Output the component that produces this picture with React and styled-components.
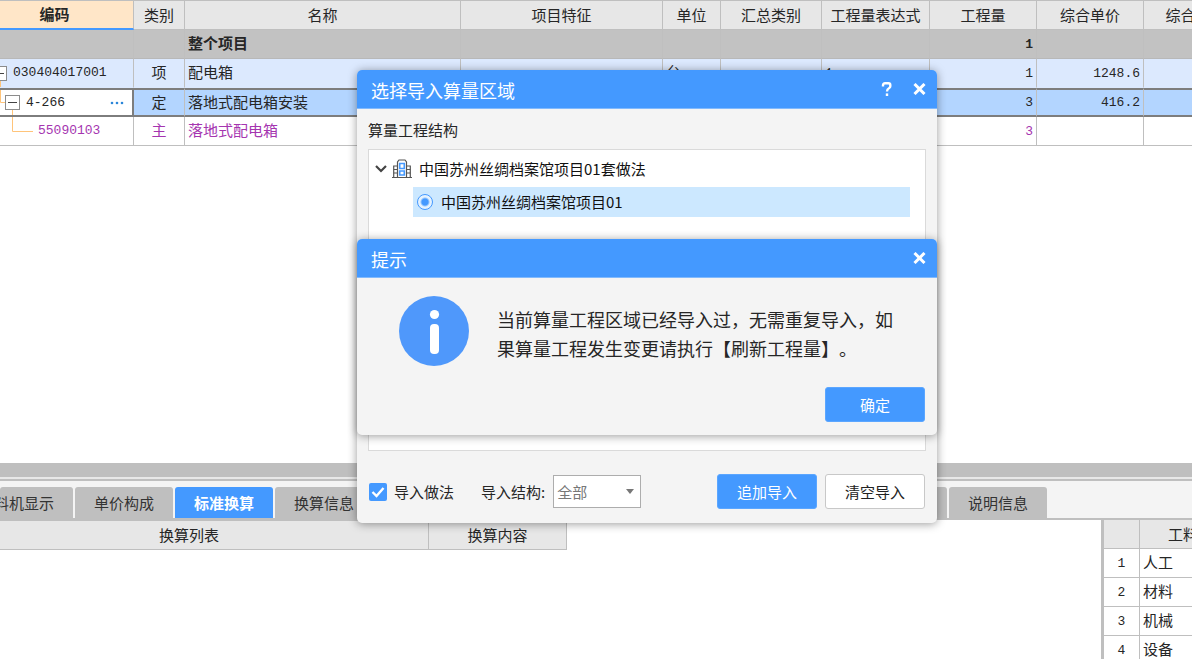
import React from "react";
import styled, { createGlobalStyle, css } from "styled-components";

const cjk = '"Noto Sans CJK SC", "Liberation Sans", sans-serif';
const mono = '"Liberation Mono", "Noto Sans CJK SC", monospace';
const blue = "#4499ff";
const line = "#bfbfbf";
const panel = "#f4f4f4";

const GlobalStyle = createGlobalStyle`
  *, *::before, *::after { box-sizing: border-box; }
  body {
    margin: 0;
    background: #fff;
    color: #262626;
    font-family: ${cjk};
    font-size: 15px;
    line-height: 20px;
    overflow: hidden;
  }
  button, select, input { font: inherit; color: inherit; margin: 0; }
`;

const Page = styled.main`
  position: relative;
  display: flex;
  flex-direction: column;
  height: 100vh;
  min-height: 600px;
  overflow: hidden;
`;

const GridPane = styled.section`
  flex: 1;
  overflow: hidden;
  background: #fff;
`;

const Grid = styled.table`
  table-layout: fixed;
  width: calc(100% + 56px);
  border-collapse: separate;
  border-spacing: 0;
`;

const HeadCell = styled.th`
  height: ${(p) => p.$height || 30}px;
  padding: 0 ${(p) => p.$inset || 0}px 1px 0;
  border: solid ${line};
  border-width: ${(p) => (p.$top ? "1px" : "0")} 1px 1px 0;
  background: #e7e7e7;
  font-weight: 400;
  text-align: center;
  white-space: nowrap;
  ${(p) =>
    p.$sorted &&
    css`
      border-bottom: 2px solid ${blue};
      background: #ffe6c8;
      font-weight: 700;
    `}
`;

const rowKinds = {
  total: css`
    background: #c2c2c2;
    font-weight: 700;
    --edge: #b8b8b8;
  `,
  item: css`
    background: #dce9fe;
    --edge: #dce9fe;
  `,
  selected: css`
    background: #b3d5ff;
  `,
  material: css`
    color: #a535b0;
    --edge: ${line};
  `,
};

const Row = styled.tr`
  ${(p) => rowKinds[p.$kind]}
`;

const Cell = styled.td`
  height: 29px;
  padding: 0 3px 2px;
  border-right: 1px solid ${line};
  border-bottom: 1px solid var(--edge, ${line});
  text-align: ${(p) => p.$align || "left"};
  white-space: nowrap;
  overflow: hidden;
  ${(p) =>
    p.$selected &&
    css`
      border-top: 2px solid #7d7d7d;
      border-bottom: 2px solid #7d7d7d;
    `}
`;

const CodeCell = styled(Cell)`
  padding: 0;
  ${(p) =>
    p.$selected &&
    css`
      background: #fff;
      border-right: 2px solid #7d7d7d;
    `}
`;

const Code = styled.div`
  display: flex;
  align-items: center;
  height: 25px;
`;

const Digits = styled.span`
  font-family: ${mono};
  font-size: 13px;
`;

const TreeLines = styled.svg`
  flex: none;
  height: 25px;
  overflow: visible;
`;

const More = styled.button`
  display: flex;
  margin-left: auto;
  padding: 8px;
  border: 0;
  background: none;
`;

const Splitter = styled.div`
  flex: none;
  height: 18px;
  border-bottom: 2px solid ${line};
  background: linear-gradient(${line} 14px, #e8e8e8 14px);
`;

const Tabs = styled.nav`
  flex: none;
  display: flex;
  gap: 2px;
  height: 39px;
  padding-top: 6px;
  border-bottom: 2px solid ${line};
  background: ${panel};
  overflow: hidden;
`;

const Tab = styled.button`
  flex: none;
  width: ${(p) => p.$width || 98}px;
  padding: 0;
  border: 0;
  border-radius: 3px 3px 0 0;
  background: ${(p) => (p.$active ? blue : line)};
  color: ${(p) => (p.$active ? "#fff" : "#333")};
  font-weight: ${(p) => (p.$active ? 700 : 400)};
  white-space: nowrap;
  ${(p) =>
    p.$clipped &&
    css`
      display: flex;
      align-items: center;
      justify-content: flex-end;
      padding-right: 19px;
      overflow: hidden;
    `}
`;

const Lower = styled.section`
  flex: none;
  display: flex;
  height: 139px;
  overflow: hidden;
`;

const Conversions = styled.div`
  flex: 1;
`;

const ConversionTable = styled.table`
  table-layout: fixed;
  width: 567px;
  border-collapse: separate;
  border-spacing: 0;
`;

const Resources = styled.div`
  flex: none;
  width: 91px;
  border-left: 3px solid ${line};
  overflow: hidden;
`;

const ResourceTable = styled.table`
  table-layout: fixed;
  width: 168px;
  border-collapse: separate;
  border-spacing: 0;
`;

const Dialog = styled.section`
  position: absolute;
  left: 357px;
  top: ${(p) => p.$top}px;
  width: 580px;
  border-radius: 5px;
  background: ${panel};
  box-shadow: 0 1px 10px rgba(0, 0, 0, 0.4);
`;

const TitleBar = styled.header`
  display: flex;
  align-items: center;
  gap: 20px;
  height: 39px;
  padding: 0 11px 0 14px;
  border-bottom: 1px solid #82bafd;
  border-radius: 5px 5px 0 0;
  background: ${blue};
  color: #fff;
`;

const Title = styled.h2`
  flex: 1;
  margin: 0;
  padding-top: 1px;
  font-size: 18px;
  font-weight: 400;
`;

const IconButton = styled.button`
  display: flex;
  padding: 0;
  border: 0;
  background: none;
`;

const DialogBody = styled.div`
  padding: 11px 11px 14px;
`;

const Tree = styled.div`
  display: flex;
  flex-direction: column;
  gap: 3px;
  height: 302px;
  margin-top: 9px;
  padding: 4px 15px 0 6px;
  border: 1px solid #dadada;
  background: #fff;
  color: #111;
`;

const TreeNode = styled.div`
  display: flex;
  align-items: center;
  gap: 5px;
  height: 30px;
`;

const NodeName = styled.span`
  padding-left: 2px;
`;

const TreeLeaf = styled.label`
  display: flex;
  align-items: center;
  gap: 8px;
  height: 30px;
  margin-left: 38px;
  padding-left: 4px;
  background: #cce8ff;
`;

const Radio = styled.input`
  appearance: none;
  width: 16px;
  height: 16px;
  border: 1px solid ${blue};
  border-radius: 50%;
  background: radial-gradient(circle, ${blue} 3px, #e4f2ff 5px);
`;

const Footer = styled.footer`
  display: flex;
  align-items: center;
  gap: 8px;
  margin-top: 23px;
  padding-right: 1px;
`;

const CheckLabel = styled.label`
  display: flex;
  align-items: center;
  gap: 7px;
  padding-left: 1px;
`;

const CheckWrap = styled.span`
  position: relative;
  display: flex;
  svg {
    position: absolute;
    inset: 0;
    pointer-events: none;
  }
`;

const Check = styled.input`
  appearance: none;
  width: 18px;
  height: 18px;
  border-radius: 2px;
  background: ${blue};
`;

const SelectLabel = styled.label`
  display: flex;
  align-items: center;
  gap: 8px;
  margin: 0 auto 0 19px;
`;

const SelectWrap = styled.span`
  position: relative;
  svg {
    position: absolute;
    right: 7px;
    top: 14px;
    pointer-events: none;
  }
`;

const Select = styled.select`
  appearance: none;
  display: block;
  width: 88px;
  height: 33px;
  padding: 0 3px;
  border: 1px solid #adadad;
  border-radius: 0;
  background: #fff;
  color: #777;
`;

const Button = styled.button`
  width: 100px;
  height: 35px;
  padding: 0;
  border: 1px solid ${(p) => (p.$primary ? "#5ba6ff" : "#c8c8c8")};
  border-radius: 3px;
  background: ${(p) => (p.$primary ? blue : "#fff")};
  color: ${(p) => (p.$primary ? "#fff" : "#222")};
`;

const Notice = styled.div`
  display: flex;
  gap: 28px;
  padding: 18px 31px 0 42px;
`;

const NoticeText = styled.p`
  margin: 9px 0 0;
  font-size: 18px;
  line-height: 29px;
  white-space: nowrap;
  text-spacing-trim: space-all;
`;

const NoticeActions = styled.div`
  display: flex;
  justify-content: flex-end;
  padding: 21px 12px 13px;
`;

const CloseIcon = () => (
  <svg width="13" height="12" viewBox="0 0 13 12" fill="none" stroke="#fff" strokeWidth="3">
    <path d="M1.5 1 L11.5 11 M11.5 1 L1.5 11" />
  </svg>
);

const HelpIcon = () => (
  <svg width="12" height="14" viewBox="0 0 12 14" fill="none" stroke="#fff" strokeWidth="2.4">
    <path d="M2 4.5 V3.2 Q2 1.3 4 1.3 H7.5 Q9.3 1.3 9.3 3 V4.2 Q9.3 5.3 8.2 6 Q6 7.2 6 9.6" />
    <path d="M6 11.4 V14" />
  </svg>
);

const BuildingIcon = () => (
  <svg width="20" height="20" viewBox="0 0 20 20" fill="none" stroke="#555" strokeWidth="1.2">
    <path d="M0 18.5 H20 M5.5 18 V3 L7 1 H13 L14.5 3 V18 M5.5 7 H1.7 V18 M14.5 7 H18.3 V18" />
    <path d="M1.7 10.5 H5 M1.7 14 H5 M15 10.5 H18.3 M15 14 H18.3" />
    <path d="M7.7 4.5 H12.3 V9.5 H7.7 Z M7.7 12 H12.3 V16 H7.7 Z" stroke={blue} strokeWidth="1.6" />
  </svg>
);

const ChevronIcon = () => (
  <svg width="12" height="8" viewBox="0 0 12 8" fill="none" stroke="#444" strokeWidth="2.2">
    <path d="M1 1 L6 6 L11 1" />
  </svg>
);

const InfoIcon = () => (
  <svg width="70" height="70" viewBox="0 0 70 70">
    <circle cx="35" cy="35" r="35" fill="#4f98fb" />
    <circle cx="35.5" cy="18.5" r="4.6" fill="#fff" />
    <rect x="31" y="28" width="9" height="30" rx="4" fill="#fff" />
  </svg>
);

const Toggle = ({ x }) => (
  <>
    <rect x={x + 0.5} y="5.5" width="14" height="14" fill="#fff" stroke="#8c8c8c" />
    <path d={`M${x + 3} 12.5 H${x + 12}`} stroke="#444" />
  </>
);

const columns = [
  ["编码", 134],
  ["类别", 51],
  ["名称", 276],
  ["项目特征"],
  ["单位", 58],
  ["汇总类别", 101],
  ["工程量表达式", 108],
  ["工程量", 107],
  ["综合单价", 107],
  ["综合合价", 104],
];

const rows = [
  { kind: "total", name: "整个项目", amount: "1" },
  { kind: "item", code: "030404017001", type: "项", name: "配电箱", unit: "台", expr: "1", amount: "1", price: "1248.6" },
  { kind: "selected", code: "4-266", type: "定", name: "落地式配电箱安装", amount: "3", price: "416.2" },
  { kind: "material", code: "55090103", type: "主", name: "落地式配电箱", amount: "3" },
];

const treeArt = {
  item: (
    <TreeLines width="13" fill="none">
      <path d="M0.5 20 V27" stroke="#ffc47a" />
      <Toggle x={-8} />
    </TreeLines>
  ),
  selected: (
    <TreeLines width="26" fill="none">
      <path d="M0.5 0 V12.5 H5 M12.5 20 V25" stroke="#ffc47a" />
      <Toggle x={5} />
    </TreeLines>
  ),
  material: (
    <TreeLines width="38" fill="none">
      <path d="M12.5 -2 V12.5 H33" stroke="#ffc47a" />
    </TreeLines>
  ),
};

function BillRow({ row }) {
  const selected = row.kind === "selected";
  return (
    <Row $kind={row.kind}>
      <CodeCell $selected={selected}>
        {row.code && (
          <Code>
            {treeArt[row.kind]}
            <Digits>{row.code}</Digits>
            {selected && (
              <More aria-label="更多">
                <svg width="14" height="4" fill="#2b86d9">
                  <circle cx="2" cy="2" r="1.3" />
                  <circle cx="7" cy="2" r="1.3" />
                  <circle cx="12" cy="2" r="1.3" />
                </svg>
              </More>
            )}
          </Code>
        )}
      </CodeCell>
      <Cell $selected={selected} $align="center">{row.type}</Cell>
      <Cell $selected={selected}>{row.name}</Cell>
      <Cell $selected={selected} />
      <Cell $selected={selected}>{row.unit}</Cell>
      <Cell $selected={selected} />
      <Cell $selected={selected}><Digits>{row.expr}</Digits></Cell>
      <Cell $selected={selected} $align="right"><Digits>{row.amount}</Digits></Cell>
      <Cell $selected={selected} $align="right"><Digits>{row.price}</Digits></Cell>
      <Cell $selected={selected} />
    </Row>
  );
}

export default function App() {
  return (
    <Page>
      <GlobalStyle />
      <GridPane>
        <Grid>
          <colgroup>
            {columns.map(([name, width]) => (
              <col key={name} width={width} />
            ))}
          </colgroup>
          <thead>
            <tr>
              {columns.map(([name], i) => (
                <HeadCell key={name} $top $sorted={i === 0} $inset={i === 0 ? 24 : 0}>
                  {name}
                </HeadCell>
              ))}
            </tr>
          </thead>
          <tbody>
            {rows.map((row) => (
              <BillRow key={row.kind} row={row} />
            ))}
          </tbody>
        </Grid>
      </GridPane>

      <Splitter />
      <Tabs>
        <Tab $width={73} $clipped>料机显示</Tab>
        <Tab>单价构成</Tab>
        <Tab $active>标准换算</Tab>
        <Tab>换算信息</Tab>
        <Tab $width={572} aria-label="其他" />
        <Tab>说明信息</Tab>
      </Tabs>
      <Lower>
        <Conversions>
          <ConversionTable>
            <colgroup>
              <col width="429" />
              <col width="138" />
            </colgroup>
            <thead>
              <tr>
                <HeadCell $top $inset={50}>换算列表</HeadCell>
                <HeadCell $top>换算内容</HeadCell>
              </tr>
            </thead>
          </ConversionTable>
        </Conversions>
        <Resources>
          <ResourceTable>
            <colgroup>
              <col width="36" />
              <col />
            </colgroup>
            <thead>
              <tr>
                <HeadCell $height={29} />
                <HeadCell $height={29}>工料机类别</HeadCell>
              </tr>
            </thead>
            <tbody>
              {["人工", "材料", "机械", "设备"].map((name, i) => (
                <tr key={name}>
                  <Cell $align="center"><Digits>{i + 1}</Digits></Cell>
                  <Cell>{name}</Cell>
                </tr>
              ))}
            </tbody>
          </ResourceTable>
        </Resources>
      </Lower>

      <Dialog $top={70} aria-label="选择导入算量区域">
        <TitleBar>
          <Title>选择导入算量区域</Title>
          <IconButton aria-label="帮助"><HelpIcon /></IconButton>
          <IconButton aria-label="关闭"><CloseIcon /></IconButton>
        </TitleBar>
        <DialogBody>
          <div>算量工程结构</div>
          <Tree>
            <TreeNode>
              <ChevronIcon />
              <BuildingIcon />
              <NodeName>中国苏州丝绸档案馆项目01套做法</NodeName>
            </TreeNode>
            <TreeLeaf>
              <Radio type="radio" name="project" defaultChecked />
              中国苏州丝绸档案馆项目01
            </TreeLeaf>
          </Tree>
          <Footer>
            <CheckLabel>
              <CheckWrap>
                <Check type="checkbox" defaultChecked />
                <svg width="18" height="18" fill="none" stroke="#fff" strokeWidth="2.4">
                  <path d="M3.5 9 L7.5 13 L14.5 5" />
                </svg>
              </CheckWrap>
              导入做法
            </CheckLabel>
            <SelectLabel>
              导入结构:
              <SelectWrap>
                <Select defaultValue="全部">
                  <option>全部</option>
                </Select>
                <svg width="8" height="5" fill="#777">
                  <path d="M0 0 H8 L4 5 Z" />
                </svg>
              </SelectWrap>
            </SelectLabel>
            <Button $primary>追加导入</Button>
            <Button>清空导入</Button>
          </Footer>
        </DialogBody>
      </Dialog>

      <Dialog $top={239} aria-label="提示">
        <TitleBar>
          <Title>提示</Title>
          <IconButton aria-label="关闭"><CloseIcon /></IconButton>
        </TitleBar>
        <Notice>
          <InfoIcon />
          <NoticeText>
            当前算量工程区域已经导入过，无需重复导入，如
            <br />
            果算量工程发生变更请执行【刷新工程量】。
          </NoticeText>
        </Notice>
        <NoticeActions>
          <Button $primary>确定</Button>
        </NoticeActions>
      </Dialog>
    </Page>
  );
}
